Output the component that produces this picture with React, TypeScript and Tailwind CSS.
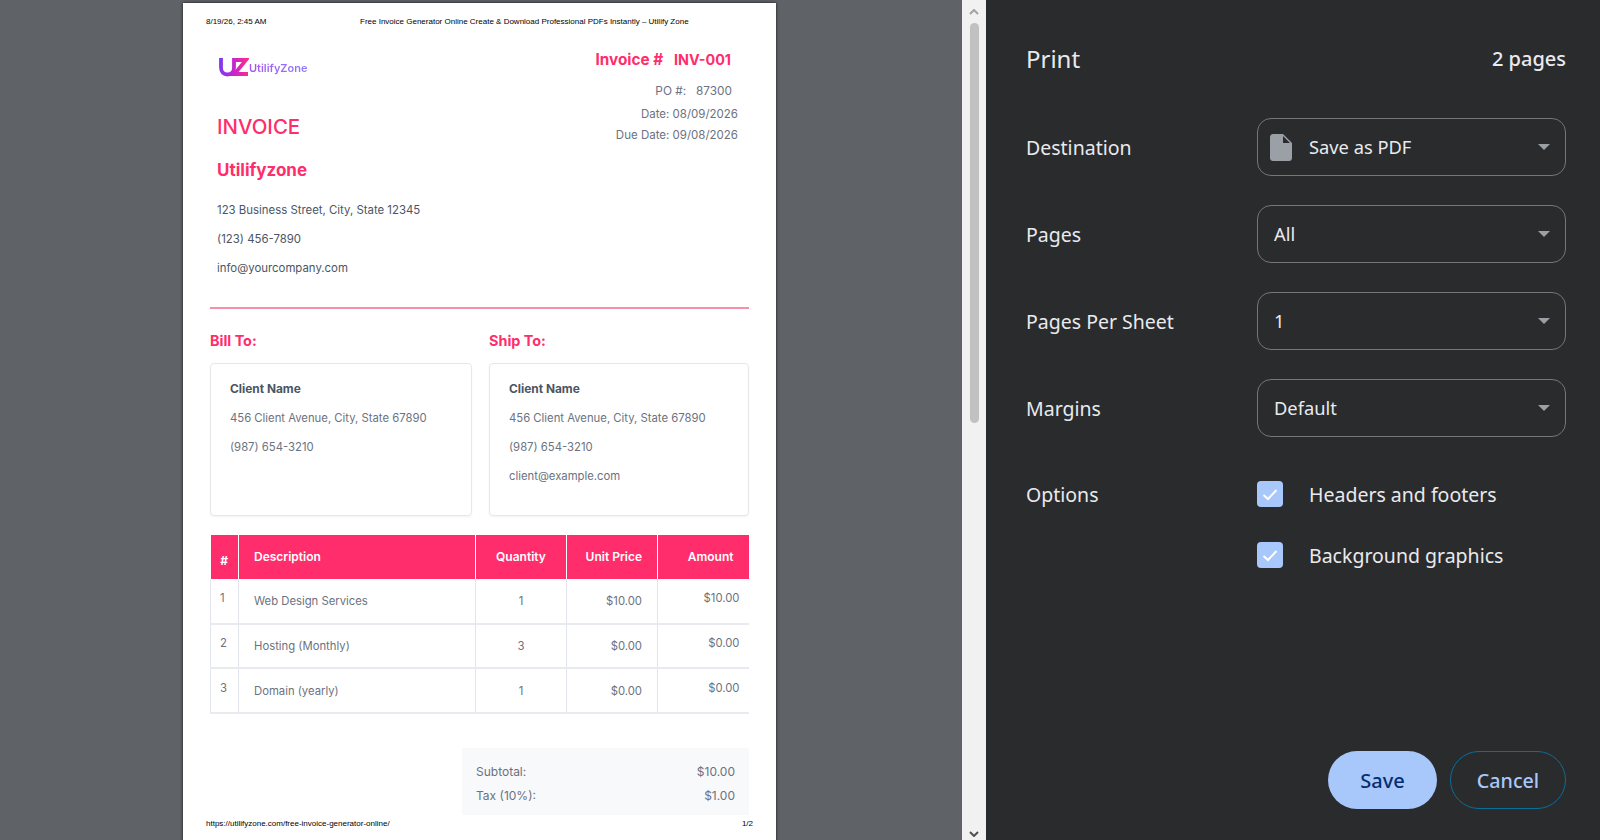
const uiFont = "font-['Noto_Sans',sans-serif]";

const SELECTS = [
  { label: "Destination", value: "Save as PDF", icon: true },
  { label: "Pages", value: "All", icon: false },
  { label: "Pages Per Sheet", value: "1", icon: false },
  { label: "Margins", value: "Default", icon: false },
];

const ROWS = [
  { n: "1", desc: "Web Design Services", qty: "1", price: "$10.00", amount: "$10.00" },
  { n: "2", desc: "Hosting (Monthly)", qty: "3", price: "$0.00", amount: "$0.00" },
  { n: "3", desc: "Domain (yearly)", qty: "1", price: "$0.00", amount: "$0.00" },
];

function Logo() {
  return (
    <div className="ml-[2px] flex h-[26px] items-center">
      <svg width="30" height="20" viewBox="0 0 30 20" fill="none">
        <defs>
          <linearGradient id="uz" x1="0" y1="0" x2="30" y2="0" gradientUnits="userSpaceOnUse">
            <stop offset="0" stopColor="#7c3aed" />
            <stop offset="0.45" stopColor="#c026d3" />
            <stop offset="1" stopColor="#ff2d87" />
          </linearGradient>
        </defs>
        <path
          d="M2 1V10.5C2 15.5 5 17.5 8.5 17.5C12 17.5 15 15.5 15 10.5V1M15 3H27L15.5 17H29"
          stroke="url(#uz)"
          strokeWidth="3.8"
        />
      </svg>
      <span className="mt-[2px] bg-gradient-to-r from-[#a855f7] to-[#8b7cf6] bg-clip-text text-[11px] font-semibold text-transparent">
        UtilifyZone
      </span>
    </div>
  );
}

function AddressCard({ lines, width }: { lines: string[]; width: string }) {
  return (
    <div className={`h-[153px] rounded-[4px] border border-[#e5e7eb] pl-[19px] pt-[14px] shadow-[0_1px_2px_rgba(0,0,0,0.05)] ${width}`}>
      <p className="h-[22px] text-[11.9px] leading-[22px] font-bold text-[#4b5563]">Client Name</p>
      {lines.map((l) => (
        <p key={l} className="mt-[7px] h-[22px] text-[11.3px] leading-[22px] text-[#6b7280]">
          {l}
        </p>
      ))}
    </div>
  );
}

function InvoicePage() {
  return (
    <div className="relative h-[900px] w-[593px] shrink-0 bg-white font-['Inter',sans-serif] shadow-[0_0_3px_rgba(0,0,0,0.8)]">
      <div className="flex h-[37px] items-center pl-[23px] font-['Liberation_Sans',sans-serif] text-[8px] text-black">
        <span className="w-[154px]">8/19/26, 2:45 AM</span>
        <span>Free Invoice Generator Online Create &amp; Download Professional PDFs Instantly – Utilify Zone</span>
      </div>

      <div className="px-[27px]">
        <div className="flex justify-between">
          <div className="pl-[7px]">
            <div className="mt-[14px]">
              <Logo />
            </div>
            <h1 className="mt-[32px] h-[30px] text-[20.4px] leading-[30px] font-medium text-[#ff2d6b]">INVOICE</h1>
            <h2 className="mt-[16px] h-[24px] text-[17px] leading-[24px] font-bold text-[#ff2d6b]">Utilifyzone</h2>
            <div className="mt-[14px] text-[11.4px] leading-[29px] text-[#4b5563]">
              <p>123 Business Street, City, State 12345</p>
              <p>(123) 456-7890</p>
              <p>info@yourcompany.com</p>
            </div>
          </div>
          <div className="pr-[11px] text-right text-[11.5px] text-[#6b7280]">
            <p className="mt-[10px] h-[20px] pr-[7px] text-[15.3px] leading-[20px] font-bold text-[#ff2d6b]">
              Invoice #<span className="ml-[11px] text-[14.3px]">INV-001</span>
            </p>
            <p className="mt-[11px] h-[20px] pr-[6px] text-[11.8px] leading-[20px]">PO #:&nbsp;&nbsp; 87300</p>
            <p className="mt-[3px] h-[20px] leading-[20px]">Date: 08/09/2026</p>
            <p className="mt-[1px] h-[20px] leading-[20px]">Due Date: 09/08/2026</p>
          </div>
        </div>

        <div className="mt-[24px] border-t-2 border-[#f68fa8]" />

        <div className="mt-[22px] flex gap-[17px]">
          <div className="w-[262px]">
            <h3 className="h-[20px] text-[14.4px] leading-[20px] font-bold text-[#ff2d6b]">Bill To:</h3>
            <div className="mt-[12px]">
              <AddressCard width="w-[262px]" lines={["456 Client Avenue, City, State 67890", "(987) 654-3210"]} />
            </div>
          </div>
          <div className="w-[260px]">
            <h3 className="h-[20px] text-[14.4px] leading-[20px] font-bold text-[#ff2d6b]">Ship To:</h3>
            <div className="mt-[12px]">
              <AddressCard width="w-[260px]" lines={["456 Client Avenue, City, State 67890", "(987) 654-3210", "client@example.com"]} />
            </div>
          </div>
        </div>

        <table className="mt-[19px] w-[538px] table-fixed border-collapse text-[11.3px] text-[#6b7280]">
          <colgroup>
            <col className="w-[28px]" />
            <col className="w-[237px]" />
            <col className="w-[91px]" />
            <col className="w-[91px]" />
            <col className="w-[91px]" />
          </colgroup>
          <thead>
            <tr className="h-[44px] bg-[#ff2d6b] text-[12px] text-white">
              <th className="border-r border-white pt-[7px] text-center font-bold">#</th>
              <th className="border-r border-white pl-[15px] text-left font-semibold">Description</th>
              <th className="border-r border-white text-center font-semibold">Quantity</th>
              <th className="border-r border-white pr-[15px] text-right font-semibold">Unit Price</th>
              <th className="pr-[15px] text-right font-semibold">Amount</th>
            </tr>
          </thead>
          <tbody>
            {ROWS.map((r) => (
              <tr key={r.n} className="h-[44.5px] border-b-2 border-[#e8eaf0]">
                <td className="border-x border-[#e2e4ee] pb-[4px] pl-[9px]">{r.n}</td>
                <td className="border-r border-[#e2e4ee] pl-[15px] pt-[2px]">{r.desc}</td>
                <td className="border-r border-[#e2e4ee] pt-[2px] text-center">{r.qty}</td>
                <td className="border-r border-[#e2e4ee] pr-[15px] pt-[2px] text-right">{r.price}</td>
                <td className="pb-[4px] pr-[9px] text-right">{r.amount}</td>
              </tr>
            ))}
          </tbody>
        </table>

        <div className="ml-[252px] mt-[34px] h-[67px] w-[287px] bg-[#f8f9fa] pl-[14px] pr-[14px] pt-[13px] text-[12px] text-[#6b7280]">
          <div className="flex h-[23px] items-center justify-between">
            <span>Subtotal:</span>
            <span>$10.00</span>
          </div>
          <div className="flex h-[24px] items-center justify-between">
            <span>Tax (10%):</span>
            <span>$1.00</span>
          </div>
        </div>
      </div>

      <div className="absolute left-[23px] top-[815px] flex h-[12px] w-[547px] items-center justify-between font-['Liberation_Sans',sans-serif] text-[8px] text-black">
        <span>https://utilifyzone.com/free-invoice-generator-online/</span>
        <span>1/2</span>
      </div>
    </div>
  );
}

function Scrollbar() {
  return (
    <div className="flex h-full w-[24px] shrink-0 flex-col items-center bg-[#f1f1f1]">
      <svg className="mt-[9px] shrink-0" width="10" height="6" viewBox="0 0 10 6">
        <path d="M1 5L5 1L9 5" fill="none" stroke="#a3a3a3" strokeWidth="2" />
      </svg>
      <div className="mt-[8px] h-[400px] w-[9px] rounded-full bg-[#c1c1c1]" />
      <svg className="mb-[3px] mt-auto shrink-0" width="10" height="6" viewBox="0 0 10 6">
        <path d="M1 1L5 5L9 1" fill="none" stroke="#505050" strokeWidth="2" />
      </svg>
    </div>
  );
}

function SelectBox({ value, icon }: { value: string; icon: boolean }) {
  return (
    <div className="flex h-[58px] w-[309px] items-center rounded-[14px] border-[1.5px] border-[#74767a] pl-[16px] pr-[15px]">
      {icon && (
        <svg className="-ml-[4px] mr-[17px] shrink-0" width="22" height="27" viewBox="0 0 22 27">
          <path
            d="M3 0H13L22 9V24C22 25.7 20.7 27 19 27H3C1.3 27 0 25.7 0 24V3C0 1.3 1.3 0 3 0Z"
            fill="#9aa0a6"
          />
          <path d="M13 2V9H20Z" fill="#2a2b2d" />
        </svg>
      )}
      <span className="text-[18.3px] text-[#e8eaed]">{value}</span>
      <svg className="ml-auto" width="12" height="6" viewBox="0 0 12 6">
        <path d="M0 0H12L6 6Z" fill="#9aa0a6" />
      </svg>
    </div>
  );
}

function CheckOption({ label }: { label: string }) {
  return (
    <div className="flex h-[26px] items-center">
      <span className="flex h-[26px] w-[26px] shrink-0 items-center justify-center rounded-[4px] bg-[#a8c7fa]">
        <svg width="16" height="13" viewBox="0 0 16 13">
          <path d="M1.5 7L6 11L14.5 2" fill="none" stroke="#ffffff" strokeWidth="2" />
        </svg>
      </span>
      <span className="ml-[26px] pt-[2px] text-[19.5px] text-[#e8eaed]">{label}</span>
    </div>
  );
}

function PrintPanel() {
  return (
    <div className={`flex h-full w-[614px] shrink-0 flex-col bg-[#2a2b2d] pl-[40px] pr-[34px] ${uiFont}`}>
      <div className="mt-[39px] flex h-[40px] items-center justify-between text-[#e8eaed]">
        <h1 className="text-[24px]">Print</h1>
        <span className="text-[20px] font-medium">2 pages</span>
      </div>

      <div className="mt-[39px] flex flex-col gap-[29px]">
        {SELECTS.map((s) => (
          <div key={s.label} className="flex items-center">
            <span className="w-[231px] pt-[1px] text-[19.5px] text-[#e8eaed]">{s.label}</span>
            <SelectBox value={s.value} icon={s.icon} />
          </div>
        ))}
      </div>

      <div className="mt-[44px] flex">
        <span className="flex h-[26px] w-[231px] items-center pt-[2px] text-[19.5px] text-[#e8eaed]">Options</span>
        <div className="flex flex-col gap-[35px]">
          <CheckOption label="Headers and footers" />
          <CheckOption label="Background graphics" />
        </div>
      </div>

      <div className="mb-[31px] mt-auto flex justify-end gap-[13px]">
        <button className="h-[58px] w-[109px] rounded-full bg-[#a8c7fa] pt-[2px] text-[20px] font-medium text-[#062e6f]">
          Save
        </button>
        <button className="h-[58px] w-[116px] rounded-full border-[1.5px] border-[#0b6e99] pt-[2px] text-[19.7px] font-medium text-[#a8c7fa]">
          Cancel
        </button>
      </div>
    </div>
  );
}

export default function App() {
  return (
    <div className="flex h-[840px] w-[1600px] overflow-hidden">
      <div className="h-full w-[962px] shrink-0 overflow-hidden bg-[#5f6368] pl-[183px] pt-[3px]">
        <InvoicePage />
      </div>
      <Scrollbar />
      <PrintPanel />
    </div>
  );
}
